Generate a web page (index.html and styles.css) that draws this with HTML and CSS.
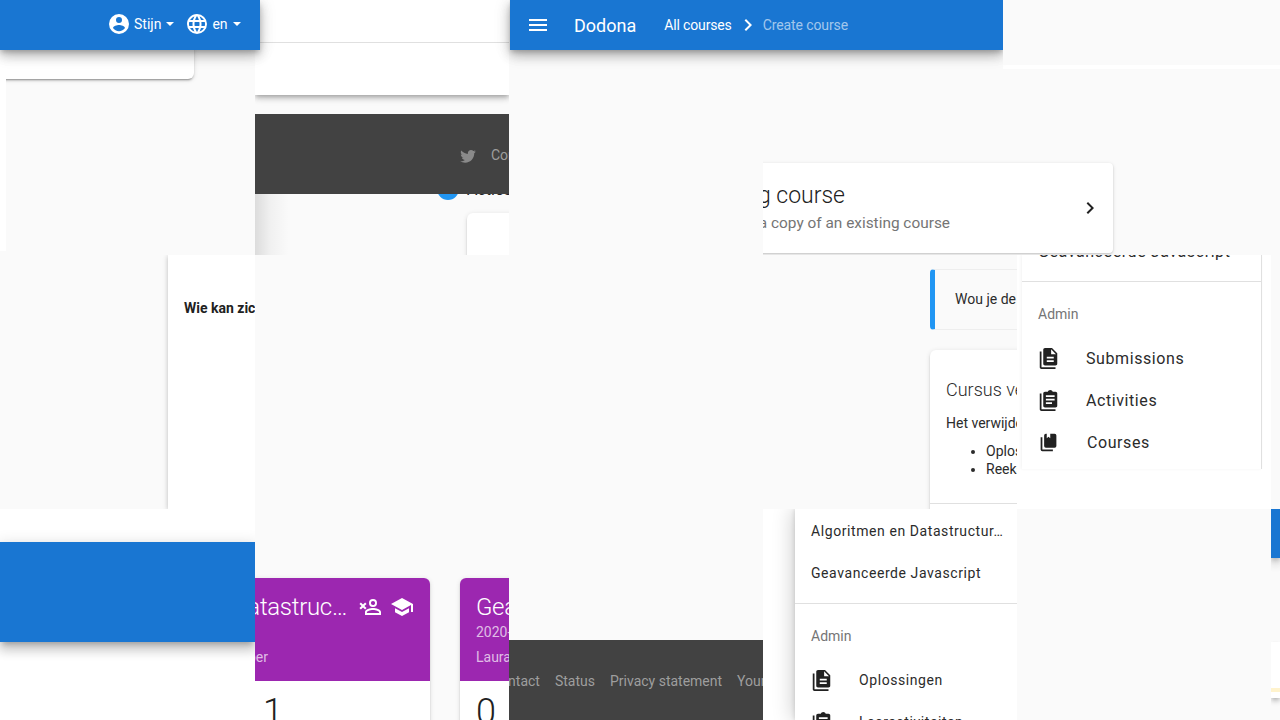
FILE: index.html
```html
<!DOCTYPE html>
<html lang="en">
<head>
<meta charset="utf-8">
<title>Dodona</title>
<link rel="stylesheet" href="styles.css">
</head>
<body>
<main class="collage">
  <header class="appbar appbar-account">
    <svg class="icon-24" viewBox="0 0 24 24"><path d="M12,19.2C9.5,19.2 7.29,17.92 6,16C6.03,14 10,12.9 12,12.9C14,12.9 17.97,14 18,16C16.71,17.92 14.5,19.2 12,19.2M12,5A3,3 0 0,1 15,8A3,3 0 0,1 12,11A3,3 0 0,1 9,8A3,3 0 0,1 12,5M12,2A10,10 0 0,0 2,12A10,10 0 0,0 12,22A10,10 0 0,0 22,12A10,10 0 0,0 12,2Z"/></svg>
    <span class="appbar-label">Stijn</span><i class="caret"></i>
    <svg class="icon-24 lang-icon" viewBox="0 0 24 24"><path d="M16.36,14C16.44,13.34 16.5,12.68 16.5,12C16.5,11.32 16.44,10.66 16.36,10H19.74C19.9,10.64 20,11.31 20,12C20,12.69 19.9,13.36 19.74,14M14.59,19.56C15.19,18.45 15.65,17.25 15.97,16H18.92C17.96,17.65 16.43,18.93 14.59,19.56M14.34,14H9.66C9.56,13.34 9.5,12.68 9.5,12C9.5,11.32 9.56,10.65 9.66,10H14.34C14.43,10.65 14.5,11.32 14.5,12C14.5,12.68 14.43,13.34 14.34,14M12,19.96C11.17,18.76 10.5,17.43 10.09,16H13.91C13.5,17.43 12.83,18.76 12,19.96M8,8H5.08C6.03,6.34 7.57,5.06 9.4,4.44C8.8,5.55 8.35,6.75 8,8M5.08,16H8C8.35,17.25 8.8,18.45 9.4,19.56C7.57,18.93 6.03,17.65 5.08,16M4.26,14C4.1,13.36 4,12.69 4,12C4,11.31 4.1,10.64 4.26,10H7.64C7.56,10.66 7.5,11.32 7.5,12C7.5,12.68 7.56,13.34 7.64,14M12,4.03C12.83,5.23 13.5,6.57 13.91,8H10.09C10.5,6.57 11.17,5.23 12,4.03M18.92,8H15.97C15.65,6.75 15.19,5.55 14.59,4.44C16.43,5.07 17.96,6.34 18.92,8M12,2C6.47,2 2,6.5 2,12A10,10 0 0,0 12,22A10,10 0 0,0 22,12A10,10 0 0,0 12,2Z"/></svg>
    <span class="appbar-label lang-label">en</span><i class="caret"></i>
  </header>

  <header class="appbar appbar-nav">
    <svg class="icon-24" viewBox="0 0 24 24"><path d="M3,6H21V8H3V6M3,11H21V13H3V11M3,16H21V18H3V16Z"/></svg>
    <span class="brand">Dodona</span>
    <span class="crumb">All courses</span>
    <svg class="icon-24 crumb-sep" viewBox="0 0 24 24"><path d="M8.59,16.58L13.17,12L8.59,7.41L10,6L16,12L10,18L8.59,16.58Z"/></svg>
    <span class="crumb crumb-current">Create course</span>
  </header>
  <div class="blank-corner"></div>

  <section class="tile cell-a">
    <div class="account-card"></div>
    <div class="white-strip"></div>
  </section>

  <section class="tile cell-b">
    <div class="top-panel"></div>
    <div class="footer footer-b">
      <div class="footer-row">
        <svg class="twitter" viewBox="0 0 24 24"><path d="M22.46,6C21.69,6.35 20.86,6.58 20,6.69C20.88,6.16 21.56,5.32 21.88,4.31C21.05,4.81 20.13,5.16 19.16,5.36C18.37,4.5 17.26,4 16,4C13.65,4 11.73,5.92 11.73,8.29C11.73,8.63 11.77,8.96 11.84,9.27C8.28,9.09 5.11,7.38 3,4.79C2.63,5.42 2.42,6.16 2.42,6.94C2.42,8.43 3.17,9.75 4.33,10.5C3.62,10.5 2.96,10.3 2.38,10C2.38,10 2.38,10 2.38,10.03C2.38,12.11 3.86,13.85 5.82,14.24C5.46,14.34 5.08,14.39 4.69,14.39C4.42,14.39 4.15,14.36 3.89,14.31C4.43,16 6,17.26 7.89,17.29C6.43,18.45 4.58,19.13 2.56,19.13C2.22,19.13 1.88,19.11 1.54,19.07C3.44,20.29 5.7,21 8.12,21C16,21 20.31,14.46 20.31,8.79C20.31,8.6 20.31,8.42 20.3,8.23C21.14,7.63 21.86,6.87 22.46,6Z"/></svg>
        <span>Contact</span>
      </div>
    </div>
    <div class="fade-shadow"></div>
    <div class="info-dot"></div>
    <div class="info-text">Acties</div>
    <div class="peek-card"></div>
  </section>

  <section class="tile cell-c"></section>

  <section class="tile cell-d">
    <div class="thin-strip"></div>
    <div class="copy-card">
      <div class="copy-text">
        <div class="copy-title">Existing course</div>
        <div class="copy-sub">Start from a copy of an existing course</div>
      </div>
      <svg class="icon-24" viewBox="0 0 24 24"><path d="M8.59,16.58L13.17,12L8.59,7.41L10,6L16,12L10,18L8.59,16.58Z"/></svg>
    </div>
  </section>

  <section class="tile cell-e">
    <div class="form-card"><strong>Wie kan zichzelf registreren?</strong></div>
  </section>

  <section class="tile cell-f"></section>

  <section class="tile cell-g">
    <div class="alert">Wou je de cursus aanpassen?</div>
    <div class="danger-card">
      <h2 class="danger-title">Cursus verwijderen</h2>
      <p class="danger-text">Het verwijderen van een cursus</p>
      <ul class="danger-list">
        <li>Oplossingen</li>
        <li>Reeksen</li>
      </ul>
      <div class="danger-rule"></div>
    </div>
  </section>

  <section class="tile cell-h">
    <nav class="drawer drawer-top">
      <div class="drawer-course cut-course">Geavanceerde Javascript</div>
      <div class="drawer-rule"></div>
      <div class="drawer-heading">Admin</div>
      <div class="drawer-item">
        <svg class="drawer-icon" viewBox="0 0 24 24"><path d="M16 0H8C6.9 0 6 .9 6 2V18C6 19.1 6.9 20 8 20H20C21.1 20 22 19.1 22 18V6L16 0M18 16H10V14H18V16M18 12H10V10H18V12M15 7V1.5L20.5 7H15M4 4V22H20V24H4C2.9 24 2 23.1 2 22V4H4Z"/></svg>
        <span>Submissions</span>
      </div>
      <div class="drawer-item">
        <svg class="drawer-icon" viewBox="0 0 24 24"><path fill-rule="evenodd" d="M4 4V22H20V24H4C2.9 24 2 23.1 2 22V4H4ZM9 2H11.2C11.6 .8 12.7 0 14 0S16.4 .8 16.8 2H20C21.1 2 22 2.9 22 4V18C22 19.1 21.1 20 20 20H8C6.9 20 6 19.1 6 18V4C6 2.9 6.9 2 8 2ZM9 6V8H19V6ZM9 10V12H19V10ZM9 14V16H16V14Z"/></svg>
        <span>Activities</span>
      </div>
      <div class="drawer-item">
        <svg class="drawer-icon" viewBox="0 0 24 24"><path d="M19,18H9A2,2 0 0,1 7,16V4A2,2 0 0,1 9,2H10V7L12,5.5L14,7V2H19A2,2 0 0,1 21,4V16A2,2 0 0,1 19,18M17,20V22H5A2,2 0 0,1 3,20V6H5V20H17Z"/></svg>
        <span class="nudge">Courses</span>
      </div>
    </nav>
  </section>

  <section class="tile cell-i">
    <div class="blue-bar"></div>
  </section>

  <section class="tile cell-j">
    <article class="course-card course-first">
      <div class="course-head">
        <div class="course-title-row">
          <span class="course-title">Algoritmen en Datastruc…</span>
          <svg class="icon-24" viewBox="0 0 24 24"><path d="M15,4A4,4 0 0,0 11,8A4,4 0 0,0 15,12A4,4 0 0,0 19,8A4,4 0 0,0 15,4M15,5.9C16.16,5.9 17.1,6.84 17.1,8C17.1,9.16 16.16,10.1 15,10.1A2.1,2.1 0 0,1 12.9,8A2.1,2.1 0 0,1 15,5.9M1.46 8.88L2.88 7.46L5 9.59L7.12 7.46L8.54 8.88L6.41 11L8.54 13.12L7.12 14.54L5 12.41L2.88 14.54L1.46 13.12L3.59 11ZM15,13C12.33,13 7,14.33 7,17V20H23V17C23,14.33 17.67,13 15,13M15,14.9C17.97,14.9 21.1,16.36 21.1,17V18.1H8.9V17C8.9,16.36 12,14.9 15,14.9Z"/></svg>
          <svg class="icon-24" viewBox="0 0 24 24"><path d="M12,3L1,9L12,15L21,10.09V17H23V9M5,13.18V17.18L12,21L19,17.18V13.18L12,17L5,13.18Z"/></svg>
        </div>
        <div class="course-year">2020-2021</div>
        <div class="course-teacher">Laura Van Hooijdonk Gabber</div>
      </div>
      <div class="course-count">1</div>
    </article>
    <article class="course-card course-second">
      <div class="course-head">
        <div class="course-title-row"><span class="course-title">Geavanceerde Javascript</span></div>
        <div class="course-year">2020-2021</div>
        <div class="course-teacher">Laura Van Hooijdonk</div>
      </div>
      <div class="course-count">0</div>
    </article>
  </section>

  <section class="tile cell-k">
    <div class="footer footer-k">
      <div class="footer-row">
        <span>Contact</span>
        <span>Status</span>
        <span>Privacy statement</span>
        <span>Your data</span>
      </div>
    </div>
  </section>

  <section class="tile cell-l">
    <nav class="drawer drawer-bottom">
      <div class="drawer-course">Algoritmen en Datastructur…</div>
      <div class="drawer-course">Geavanceerde Javascript</div>
      <div class="drawer-rule"></div>
      <div class="drawer-heading">Admin</div>
      <div class="drawer-item">
        <svg class="drawer-icon" viewBox="0 0 24 24"><path d="M16 0H8C6.9 0 6 .9 6 2V18C6 19.1 6.9 20 8 20H20C21.1 20 22 19.1 22 18V6L16 0M18 16H10V14H18V16M18 12H10V10H18V12M15 7V1.5L20.5 7H15M4 4V22H20V24H4C2.9 24 2 23.1 2 22V4H4Z"/></svg>
        <span>Oplossingen</span>
      </div>
      <div class="drawer-item">
        <svg class="drawer-icon" viewBox="0 0 24 24"><path fill-rule="evenodd" d="M4 4V22H20V24H4C2.9 24 2 23.1 2 22V4H4ZM9 2H11.2C11.6 .8 12.7 0 14 0S16.4 .8 16.8 2H20C21.1 2 22 2.9 22 4V18C22 19.1 21.1 20 20 20H8C6.9 20 6 19.1 6 18V4C6 2.9 6.9 2 8 2ZM9 6V8H19V6ZM9 10V12H19V10ZM9 14V16H16V14Z"/></svg>
        <span>Leeractiviteiten</span>
      </div>
    </nav>
  </section>

  <section class="tile cell-m"></section>

  <section class="tile cell-n">
    <div class="edge-blue"></div>
    <div class="edge-card"><div class="edge-warning"></div></div>
  </section>
</main>
</body>
</html>
```

FILE: styles.css
```css
* { box-sizing: border-box; }
html, body { margin: 0; padding: 0; }
body {
  width: 1280px;
  height: 720px;
  overflow: hidden;
  background: #fafafa;
  color: #212121;
  font-family: Roboto, "Noto Sans", sans-serif;
  font-size: 14px;
}
svg { display: block; fill: currentColor; flex: none; }
.icon-24 { width: 24px; height: 24px; }

.collage {
  position: relative;
  display: grid;
  width: 1280px;
  height: 720px;
  grid-template-columns: 255px 254px 254px 254px 254px 9px;
  grid-template-rows: 255px 254px 211px;
}
.tile { position: relative; overflow: hidden; background: #fafafa; }
.cell-a { grid-column: 1; grid-row: 1; }
.cell-b { grid-column: 2; grid-row: 1; }
.cell-c { grid-column: 3; grid-row: 1; }
.cell-d { grid-column: 4 / 7; grid-row: 1; }
.cell-e { grid-column: 1; grid-row: 2; }
.cell-f { grid-column: 2 / 4; grid-row: 2; }
.cell-g { grid-column: 4; grid-row: 2; }
.cell-h { grid-column: 5; grid-row: 2; background: #fff; }
.cell-i { grid-column: 1; grid-row: 3; background: #fff; }
.cell-j { grid-column: 2; grid-row: 3; }
.cell-k { grid-column: 3; grid-row: 3; }
.cell-l { grid-column: 4; grid-row: 3; background: #fff; }
.cell-m { grid-column: 5; grid-row: 3; }
.cell-n { grid-column: 6; grid-row: 3; }

/* app bars overlap the tiles */
.appbar {
  position: absolute;
  top: 0;
  z-index: 5;
  display: flex;
  align-items: center;
  height: 50px;
  background: #1976d2;
  color: #fff;
  box-shadow: 0 3px 5px -1px rgba(0,0,0,.2), 0 6px 10px rgba(0,0,0,.14), 0 1px 18px rgba(0,0,0,.12), 0 6px 14px rgba(0,0,0,.1);
}
.appbar-account { left: 0; width: 260px; padding: 0 0 2px 107px; }
.appbar-label { margin-left: 3px; }
.lang-label { margin-left: 3px; }
.caret {
  margin: 0 0 0 5px;
  border: 4px solid transparent;
  border-top-color: #fff;
  border-bottom: 0;
}
.lang-icon { margin-left: 11px; }
.appbar-nav { left: 510px; width: 493px; padding-left: 16px; }
.brand { margin-left: 24px; font-size: 18px; }
.crumb { margin-left: 28px; letter-spacing: -.15px; }
.crumb-sep { margin-left: 4px; }
.crumb-current { margin-left: 3px; color: rgba(255,255,255,.6); letter-spacing: -.1px; }
.blank-corner {
  position: absolute;
  top: 0;
  left: 1003px;
  z-index: 6;
  width: 277px;
  height: 65px;
  background: #fafafa;
}

/* cell a */
.account-card {
  position: absolute;
  top: 0;
  left: -20px;
  width: 214px;
  height: 79px;
  background: #fff;
  border-radius: 6px;
  box-shadow: 0 2px 2px rgba(0,0,0,.14), 0 3px 1px -2px rgba(0,0,0,.2), 0 1px 5px rgba(0,0,0,.12);
}
.white-strip {
  position: absolute;
  top: 79px;
  left: 0;
  width: 6px;
  height: 172px;
  background: #fff;
}

/* cell b */
.top-panel {
  height: 95px;
  background: linear-gradient(#fff 42px, #e0e0e0 42px, #e0e0e0 43px, #fff 43px);
  box-shadow: 0 2px 4px -1px rgba(0,0,0,.2), 0 4px 5px rgba(0,0,0,.14), 0 1px 10px rgba(0,0,0,.12);
}
.footer { position: absolute; left: 0; background: #424242; color: #9e9e9e; }
.footer-row { position: absolute; display: flex; align-items: center; gap: 15px; white-space: nowrap; }
.footer-b { top: 114px; z-index: 2; width: 100%; height: 80px; }
.footer-b .footer-row { top: 30px; left: 204px; gap: 14px; }
.twitter { width: 18px; height: 18px; margin-top: 3px; fill: #8a8a8a; }
.fade-shadow {
  position: absolute;
  top: 194px;
  left: 0;
  width: 34px;
  height: 61px;
  background: linear-gradient(90deg, rgba(0,0,0,.12), rgba(0,0,0,.04) 45%, rgba(0,0,0,0));
}
.info-dot {
  position: absolute;
  top: 178px;
  left: 182px;
  width: 22px;
  height: 22px;
  border-radius: 50%;
  background: #2196f3;
}
.info-text { position: absolute; top: 180px; left: 212px; font-size: 16px; }
.peek-card {
  position: absolute;
  top: 213px;
  left: 212px;
  width: 120px;
  height: 120px;
  background: #fff;
  border-radius: 6px;
  box-shadow: 0 2px 2px rgba(0,0,0,.14), 0 1px 5px rgba(0,0,0,.12);
}

/* cell d */
.thin-strip {
  position: absolute;
  top: 65px;
  left: 0;
  width: 100%;
  height: 4px;
  background: #fff;
  clip-path: inset(0 0 0 240px);
}
.copy-card {
  position: absolute;
  top: 163px;
  left: -60px;
  display: flex;
  align-items: center;
  width: 410px;
  height: 90px;
  padding-right: 11px;
  background: #fff;
  border-radius: 4px;
  box-shadow: 0 1px 2px rgba(0,0,0,.15), 0 1px 4px rgba(0,0,0,.1);
}
.copy-text {
  display: flex;
  flex: 1;
  flex-direction: column;
  align-items: flex-end;
  min-width: 0;
  margin: -2px 128px 0 0;
  white-space: nowrap;
}
.copy-title { flex: none; margin-right: 105px; font-size: 23px; font-weight: 300; line-height: 32px; }
.copy-sub { flex: none; font-size: 15.4px; font-weight: 400; line-height: 22px; color: #757575; }

/* cell e */
.form-card {
  position: absolute;
  top: 0;
  left: 168px;
  width: 300px;
  height: 100%;
  padding: 45px 0 0 16px;
  background: #fff;
  box-shadow: 0 1px 5px rgba(0,0,0,.25);
  line-height: 17px;
  white-space: nowrap;
}

/* cell g */
.alert {
  position: absolute;
  top: 14px;
  left: 167px;
  width: 300px;
  height: 61px;
  padding: 21px 0 0 20px;
  background: #fafafa;
  border: 1px solid #eee;
  border-left: 5px solid #2196f3;
  border-radius: 4px;
  color: #2b2b2b;
  line-height: 17px;
  white-space: nowrap;
}
.danger-card {
  position: absolute;
  top: 95px;
  left: 167px;
  width: 300px;
  height: 240px;
  padding: 28px 16px 0;
  background: #fff;
  border-radius: 6px;
  box-shadow: 0 2px 2px rgba(0,0,0,.14), 0 1px 5px rgba(0,0,0,.12);
  color: #2b2b2b;
  white-space: nowrap;
}
.danger-title { margin: 0; font-size: 18px; font-weight: 300; line-height: 24px; }
.danger-text { margin: 11px 0 0; line-height: 20px; }
.danger-list { margin: 9px 0 0; padding-left: 40px; line-height: 18px; }
.danger-rule { position: absolute; top: 153px; left: 0; width: 100%; height: 1px; background: #e0e0e0; }

/* drawers */
.drawer { position: absolute; top: 0; background: #fff; color: #2b2b2b; }
.drawer-top {
  left: 5px;
  width: 240px;
  height: 214px;
  border-right: 1px solid #e0e0e0;
  box-shadow: -1px 0 3px rgba(0,0,0,.05);
}
.drawer-bottom {
  left: 32px;
  width: 260px;
  height: 100%;
  box-shadow: -2px 0 20px rgba(0,0,0,.2), -1px 0 4px rgba(0,0,0,.1);
}
.drawer-course {
  height: 42px;
  padding-left: 16px;
  letter-spacing: .58px;
  line-height: 42px;
  white-space: nowrap;
}
.drawer-bottom .drawer-course:first-child { margin-top: 1px; }
.cut-course { height: 41px; margin-top: -24px; font-size: 16px; }
.drawer-rule { height: 1px; margin-top: 9px; background: #e0e0e0; }
.drawer-heading { height: 55px; padding: 24px 0 0 16px; color: #757575; line-height: 17px; }
.drawer-item {
  display: flex;
  align-items: center;
  height: 42px;
  padding-left: 16px;
  letter-spacing: .58px;
}
.drawer-top .drawer-item { font-size: 16px; }
.drawer-icon { width: 21px; height: 21px; margin-right: 27px; color: #212121; }
.nudge { margin-left: 1px; }

/* cell i */
.blue-bar {
  position: absolute;
  top: 33px;
  left: 0;
  width: 100%;
  height: 100px;
  background: #1976d2;
  box-shadow: 0 5px 5px -3px rgba(0,0,0,.2), 0 8px 10px 1px rgba(0,0,0,.14), 0 3px 14px 2px rgba(0,0,0,.12);
}

/* cell j */
.course-card {
  position: absolute;
  top: 69px;
  width: 270px;
  height: 200px;
  background: #fff;
  border-radius: 6px;
  box-shadow: 0 2px 2px rgba(0,0,0,.14), 0 1px 5px rgba(0,0,0,.12);
}
.course-first { left: -95px; }
.course-second { left: 205px; }
.course-head {
  height: 103px;
  padding: 12px 16px 0;
  background: #9c27b0;
  color: #fff;
  border-radius: 6px 6px 0 0;
}
.course-title-row { display: flex; align-items: center; justify-content: flex-end; gap: 8px; height: 34px; }
.course-second .course-title-row { justify-content: flex-start; }
.course-title { flex: none; font-size: 24px; font-weight: 300; line-height: 34px; letter-spacing: -.3px; white-space: nowrap; }
.course-first .course-title { margin-right: 3px; }
.course-year { height: 20px; margin-top: -2px; color: rgba(255,255,255,.7); line-height: 20px; white-space: nowrap; }
.course-teacher { margin-top: 5px; color: rgba(255,255,255,.7); line-height: 20px; white-space: nowrap; text-align: right; }
.course-second .course-teacher { text-align: left; }
.course-first .course-teacher { position: relative; right: 146px; }
.course-count { padding: 10px 16px 0; font-size: 36px; font-weight: 300; line-height: 42px; }
.course-first .course-count { padding-left: 103px; }

/* cell k */
.footer-k { top: 131px; width: 100%; height: 80px; }
.footer-k .footer-row { top: 33px; left: -18px; }

/* cell n */
.edge-blue {
  height: 49px;
  background: #1976d2;
  box-shadow: 0 3px 5px -1px rgba(0,0,0,.2), 0 6px 10px rgba(0,0,0,.14), 0 1px 18px rgba(0,0,0,.12);
}
.edge-card {
  position: absolute;
  top: 133px;
  left: 0;
  width: 100%;
  height: 56px;
  padding-top: 46px;
  background: #fff;
  box-shadow: 0 2px 4px -1px rgba(0,0,0,.2), 0 4px 5px rgba(0,0,0,.14);
}
.edge-warning { height: 4px; background: #fff3cd; }
```
